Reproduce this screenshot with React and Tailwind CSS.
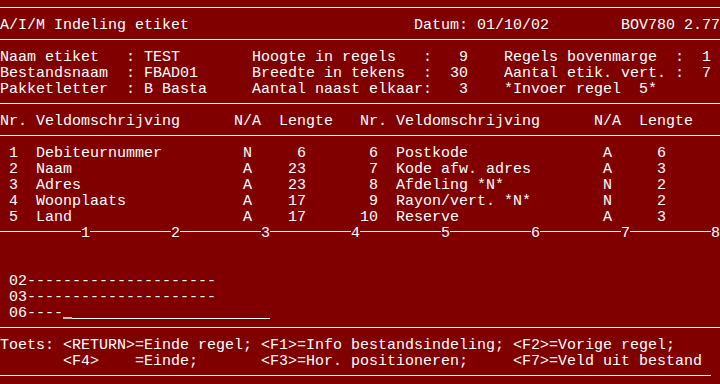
import React from 'react';

// place text pieces at fixed terminal columns (80 cols)
const line = (parts) => {
  let s = '';
  parts.forEach(([col, txt]) => {
    s = s.padEnd(col, ' ') + txt;
  });
  return s;
};

const Row = ({ children }) => (
  <div className="h-4 leading-5 whitespace-pre">{children}</div>
);

const Rule = ({ short }) => (
  <div className="h-4 pt-[7px]">
    <div className={short ? 'h-px w-[711px] bg-white' : 'h-px w-full bg-white'} />
  </div>
);

const fields = [
  ['1', 'Debiteurnummer', 'N', '6', '6', 'Postkode', 'A', '6'],
  ['2', 'Naam', 'A', '23', '7', 'Kode afw. adres', 'A', '3'],
  ['3', 'Adres', 'A', '23', '8', 'Afdeling *N*', 'N', '2'],
  ['4', 'Woonplaats', 'A', '17', '9', 'Rayon/vert. *N*', 'N', '2'],
  ['5', 'Land', 'A', '17', '10', 'Reserve', 'A', '3'],
];

export default function App() {
  return (
    <div className="w-[720px] h-[384px] overflow-hidden bg-[#800000] text-white font-['Liberation_Mono',monospace] text-[15px]">
      <Rule />
      <Row>{line([[0, 'A/I/M Indeling etiket'], [46, 'Datum: 01/10/02'], [69, 'BOV780 2.77']])}</Row>
      <Rule />
      <Row>{line([[0, 'Naam etiket'], [14, ': TEST'], [28, 'Hoogte in regels'], [47, ':   9'], [56, 'Regels bovenmarge'], [75, ':  1']])}</Row>
      <Row>{line([[0, 'Bestandsnaam'], [14, ': FBAD01'], [28, 'Breedte in tekens'], [47, ':  30'], [56, 'Aantal etik. vert.'], [75, ':  7']])}</Row>
      <Row>{line([[0, 'Pakketletter'], [14, ': B Basta'], [28, 'Aantal naast elkaar:   3'], [56, '*Invoer regel  5*']])}</Row>
      <Rule />
      <Row>{line([[0, 'Nr. Veldomschrijving'], [26, 'N/A  Lengte'], [40, 'Nr. Veldomschrijving'], [66, 'N/A  Lengte']])}</Row>
      <Rule />
      {fields.map((f) => (
        <Row key={f[0]}>
          {line([
            [0, f[0].padStart(2, ' ')],
            [4, f[1]],
            [27, f[2]],
            [32, f[3].padStart(2, ' ')],
            [40, f[4].padStart(2, ' ')],
            [44, f[5]],
            [67, f[6]],
            [73, f[7]],
          ])}
        </Row>
      ))}
      {/* ruler */}
      <div className="h-4 leading-5 flex">
        {[1, 2, 3, 4, 5, 6, 7, 8].map((n) => (
          <React.Fragment key={n}>
            <div className="w-[81px] h-px mt-[7px] bg-white" />
            <span className="w-[9px] text-center">{n}</span>
          </React.Fragment>
        ))}
      </div>
      <Row> </Row>
      <Row> </Row>
      <Row>{' 02---------------------'}</Row>
      <Row>{' 03---------------------'}</Row>
      <div className="h-4 leading-5 flex">
        <span className="whitespace-pre">{' 06----'}</span>
        <div className="w-[9px] h-4 pt-[13px]">
          <div className="h-[2px] bg-[#c0c0c0]" />
        </div>
        <div className="w-[198px] h-4 pt-[14px]">
          <div className="h-px bg-white" />
        </div>
      </div>
      <Rule />
      <Row>{line([[0, 'Toets: <RETURN>=Einde regel; <F1>=Info bestandsindeling; <F2>=Vorige regel;']])}</Row>
      <Row>{line([[7, '<F4>'], [15, '=Einde;'], [29, '<F3>=Hor. positioneren;'], [57, '<F7>=Veld uit bestand']])}</Row>
      <Rule short />
    </div>
  );
}
